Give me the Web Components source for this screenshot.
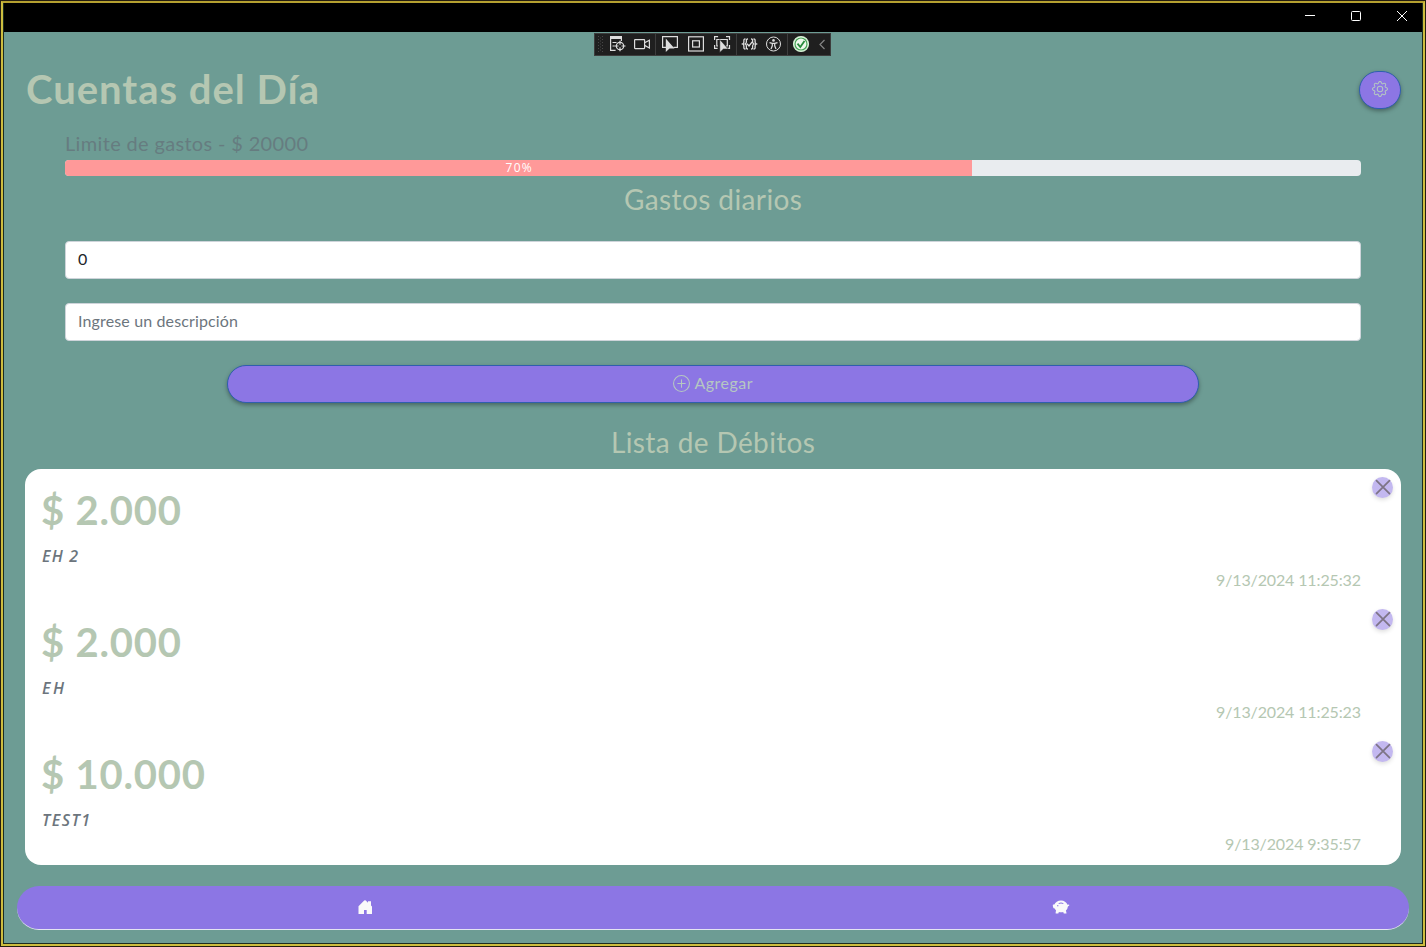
<!DOCTYPE html>
<html lang="es">
<head>
<meta charset="utf-8">
<title>Cuentas del Día</title>
<style>
html,body{margin:0;height:100%;overflow:hidden}
body{font-family:Lato,"Noto Sans",sans-serif;font-size:16px}
</style>
</head>
<body>
<app-window>
  <debug-toolbar slot="overlay"></debug-toolbar>
  <page-header heading="Cuentas del Día"></page-header>
  <spending-limit label="Limite de gastos - $ 20000" percent="70"></spending-limit>
  <section-title style="margin-top:6px" text="Gastos diarios" fit="178"></section-title>
  <text-field style="margin-top:25px" text="0" fit="9"></text-field>
  <text-field style="margin-top:24px" text="Ingrese un descripción" fit="160" placeholder></text-field>
  <add-button></add-button>
  <section-title style="margin-top:22px" text="Lista de Débitos" fit="204"></section-title>
  <debit-list>
    <debit-item amount="$ 2.000" afit="140" note="EH 2" nfit="36" date="9/13/2024 11:25:32" dfit="145"></debit-item>
    <debit-item amount="$ 2.000" afit="140" note="EH" nfit="22" date="9/13/2024 11:25:23" dfit="145"></debit-item>
    <debit-item amount="$ 10.000" afit="164" note="TEST1" nfit="48" date="9/13/2024 9:35:57" dfit="136"></debit-item>
  </debit-list>
  <bottom-nav></bottom-nav>
</app-window>
<script>
class Base extends HTMLElement{
  connectedCallback(){
    this.attachShadow({mode:'open'}).innerHTML=this.view();
  }
  a(n){return this.getAttribute(n)||''}
}
/* Text run whose tracking is tuned to a given width. */
customElements.define('fit-text',class extends Base{
  view(){return `<style>:host{display:inline-block;white-space:nowrap}span{display:inline-block}</style><span>${this.a('text')}</span>`}
  connectedCallback(){
    super.connectedCallback();
    const s=this.shadowRoot.querySelector('span'),n=this.a('text').length,w=+this.a('width');
    const gap=(w-s.getBoundingClientRect().width)/Math.max(1,n-1);
    if(n>1){s.style.letterSpacing=gap+'px';s.style.marginRight=-gap+'px'}
  }
});
customElements.define('app-window',class extends Base{
  view(){return `<style>
  :host{display:block;box-sizing:border-box;width:1426px;height:947px;border:1px solid #241d10;background:#6d9c94}
  .a{box-sizing:border-box;height:945px;border:2px solid #cdbd3f;border-top-color:#b5a030}
  .b{box-sizing:border-box;height:941px;border:1px solid #1c2c20;border-top:0;background:#6d9c94;position:relative}
  .bar{height:29px;background:#000;display:flex;justify-content:flex-end;padding-right:1px}
  .bar svg{width:46px;height:26px;fill:none;stroke:#fff}
  </style><div class="a"><div class="b"><div class="bar">
  <svg viewBox="0 0 46 26"><path d="M22 12.5h10"/></svg>
  <svg viewBox="0 0 46 26"><rect x="22.5" y="8.5" width="9" height="9" rx="1"/></svg>
  <svg viewBox="0 0 46 26"><path d="M22 8l10 10M32 8l-10 10"/></svg>
  </div><slot></slot><slot name="overlay"></slot></div></div>`}
});
customElements.define('debug-toolbar',class extends Base{
  view(){return `<style>
  :host{position:absolute;left:590px;top:30px;width:237px;height:23px;box-sizing:border-box;border:1px solid #3d3d3d;background:#1f1f1f}
  svg{display:block;width:235px;height:21px}</style>
  <svg viewBox="595 34 235 21" fill="none" stroke="#dedede" stroke-width="1.2">
  <path d="M598.5 36v16M602.5 36v16" stroke="#484848" stroke-width="1" stroke-dasharray="1 2"/><path d="M600.5 37.5v14" stroke="#484848" stroke-width="1" stroke-dasharray="1 2"/>
  <path d="M655.5 34v21M736.5 34v21M787.5 34v21" stroke="#3d3d3d" stroke-width="1"/>
  <path d="M610 36h12v3h-12z" fill="#dedede" stroke="none"/><path d="M610.6 38v12.400h5M621.400 38v3M612.500 42.500h4M612.500 46h2"/>
  <circle cx="620" cy="46" r="3.700"/><path d="M620 40.800v4M620 47.200v4M614.500 46h4M621.500 46h4"/>
  <rect x="634.600" y="39.600" width="10" height="9" rx=".5"/><path d="M644.600 42.800l4.800-2.600v7.800l-4.800-2.600"/>
  <path d="M666 47.400h-3.400v-10.800h14.800v10.800h-4"/><path d="M665.800 38.500v13.500l3.700-3.600h5z" fill="#dedede" stroke="none"/>
  <rect x="688.600" y="36.800" width="14.800" height="14.200"/><rect x="692.600" y="40.800" width="6.800" height="6.200"/>
  <path d="M714.600 40v-3.400h3.500M726 36.600h3.500V40M714.600 45v3.400h3M727 48.400h2.500V45"/><path d="M718 46h-1.200v-6.500h10.500V46H726"/><path d="M719.800 39.500v13l3.600-3.500h4.800z" fill="#dedede" stroke="#1f1f1f" stroke-width=".5"/>
  <path d="M745.500 39c-2 0-1.600 1-1.600 3 0 1.300-.5 1.600-1.400 2 .9.400 1.400.7 1.400 2 0 2-.4 3 1.600 3M753.500 39c2 0 1.600 1 1.600 3 0 1.300.5 1.600 1.400 2-.9.400-1.400.7-1.400 2 0 2 .4 3-1.600 3M748 39c-2 0-1.600 1-1.600 3 0 1.300-.5 1.600-1.400 2 .9.400 1.400.7 1.400 2 0 2-.4 3 1.600 3M751 39c2 0 1.600 1 1.600 3 0 1.300.5 1.600 1.400 2-.9.400-1.400.7-1.400 2 0 2 .4 3-1.600 3M747 43.800l2 2.200 3.200-4.200" stroke-width="1.300"/>
  <circle cx="773.500" cy="44" r="7" stroke-width="1"/><circle cx="773.500" cy="40.400" r="1.300" fill="#dedede" stroke="none"/><path d="M769.500 42.600l2.700.8h2.600l2.700-.8M772.300 43.400v2.400l-1.300 3.200M774.700 43.400v2.400l1.300 3.200" stroke-width="1.200"/>
  <circle cx="801" cy="44" r="7.500" fill="#f3fff1" stroke="#d5f0d4"/><circle cx="801" cy="44" r="6" fill="#eef8ec" stroke="#45a255"/><path d="M797.500 43.700l2.800 3.300 4.200-6" stroke="#278b3c" stroke-width="1.800"/>
  <path d="M824.500 40l-4.500 4.500 4.500 4.500" stroke="#858585"/></svg>`}
});
customElements.define('page-header',class extends Base{
  view(){return `<style>
  :host{display:flex;align-items:center;justify-content:space-between;height:60px;padding:28px 21px 0 22px}
  h1{margin:-2px 0 0;font-size:40px;line-height:48px;font-weight:700;color:#b5c7b2}
  button{display:flex;align-items:center;justify-content:center;width:42px;height:38px;padding:0 0 2px;border-radius:19px;border:1px solid #2f5fae;background:#8c76e4;box-shadow:0 2px 4px rgba(0,0,0,.35)}
  </style><h1><fit-text text="${this.a('heading')}" width="293"></fit-text></h1>
  <button aria-label="Ajustes"><svg width="16" height="16" viewBox="0 0 16 16" fill="#b5c7c2"><path d="M8 4.754a3.246 3.246 0 1 0 0 6.492 3.246 3.246 0 0 0 0-6.492M5.754 8a2.246 2.246 0 1 1 4.492 0 2.246 2.246 0 0 1-4.492 0"/><path d="M9.796 1.343c-.527-1.790-3.065-1.790-3.592 0l-.094.319a.873.873 0 0 1-1.255.52l-.292-.16c-1.640-.892-3.433.902-2.540 2.541l.159.292a.873.873 0 0 1-.52 1.255l-.319.094c-1.790.527-1.790 3.065 0 3.592l.319.094a.873.873 0 0 1 .52 1.255l-.16.292c-.892 1.640.901 3.434 2.541 2.540l.292-.159a.873.873 0 0 1 1.255.52l.094.319c.527 1.790 3.065 1.790 3.592 0l.094-.319a.873.873 0 0 1 1.255-.52l.292.16c1.640.893 3.434-.902 2.540-2.541l-.159-.292a.873.873 0 0 1 .52-1.255l.319-.094c1.790-.527 1.790-3.065 0-3.592l-.319-.094a.873.873 0 0 1-.52-1.255l.16-.292c.893-1.640-.902-3.433-2.541-2.540l-.292.159a.873.873 0 0 1-1.255-.52zm-2.633.283c.246-.835 1.428-.835 1.674 0l.094.319a1.873 1.873 0 0 0 2.693 1.115l.291-.16c.764-.415 1.600.42 1.184 1.185l-.159.292a1.873 1.873 0 0 0 1.116 2.692l.318.094c.835.246.835 1.428 0 1.674l-.319.094a1.873 1.873 0 0 0-1.115 2.693l.16.291c.415.764-.42 1.600-1.185 1.184l-.291-.159a1.873 1.873 0 0 0-2.693 1.116l-.094.318c-.246.835-1.428.835-1.674 0l-.094-.319a1.873 1.873 0 0 0-2.692-1.115l-.292.16c-.764.415-1.600-.42-1.184-1.185l.159-.291A1.873 1.873 0 0 0 1.945 8.930l-.319-.094c-.835-.246-.835-1.428 0-1.674l.319-.094A1.873 1.873 0 0 0 3.060 4.377l-.16-.292c-.415-.764.42-1.600 1.185-1.184l.292.159a1.873 1.873 0 0 0 2.692-1.115z"/></svg></button>`}
});
customElements.define('spending-limit',class extends Base{
  view(){return `<style>
  :host{display:block;margin:8px 61px 0}
  .l{font-size:20px;line-height:30px;height:32px;color:#667c80}
  .t{height:16px;border-radius:4px;background:#e9ecef;overflow:hidden}
  .f{height:16px;width:${this.a('percent')}%;background:#ff9999;color:#fff;font:12px/16px "Open Sans",sans-serif;text-align:center}
  fit-text{vertical-align:top}
  </style><div class="l"><fit-text text="${this.a('label')}" width="243"></fit-text></div>
  <div class="t"><div class="f"><fit-text text="${this.a('percent')}%" width="26"></fit-text></div></div>`}
});
customElements.define('section-title',class extends Base{
  view(){return `<style>:host{display:block;height:34px;text-align:center}
  h3{margin:0;font-size:28px;line-height:34px;font-weight:400;color:#b5c7b2}fit-text{vertical-align:top}</style>
  <h3><fit-text text="${this.a('text')}" width="${this.a('fit')}"></fit-text></h3>`}
});
customElements.define('text-field',class extends Base{
  view(){return `<style>:host{display:block;box-sizing:border-box;height:38px;margin:0 61px;padding:5px 12px;border:1px solid #ced4da;border-radius:4px;background:#fff;color:#212529;line-height:24px}
  :host([placeholder]){color:#6c757d}fit-text{vertical-align:top}</style>
  <fit-text text="${this.a('text')}" width="${this.a('fit')}"></fit-text>`}
});
customElements.define('add-button',class extends Base{
  view(){return `<style>:host{display:block;width:972px;margin:24px auto 0}
  button{display:flex;align-items:center;justify-content:center;gap:4px;width:100%;height:38px;box-sizing:border-box;padding:0 0 2px;border:1px solid #2f5fae;border-radius:19px;background:#8c76e4;color:#b5c7c2;font:inherit;line-height:24px;box-shadow:0 2px 4px rgba(0,0,0,.35)}
  </style>
  <button><svg width="17" height="17" viewBox="0 0 16 16" fill="#b5c7c2"><path d="M8 15A7 7 0 1 1 8 1a7 7 0 0 1 0 14m0 1A8 8 0 1 0 8 0a8 8 0 0 0 0 16"/><path d="M8 4a.5.5 0 0 1 .5.5v3h3a.5.5 0 0 1 0 1h-3v3a.5.5 0 0 1-1 0v-3h-3a.5.5 0 0 1 0-1h3v-3A.5.5 0 0 1 8 4"/></svg><fit-text text="Agregar" width="58"></fit-text></button>`}
});
customElements.define('debit-list',class extends Base{
  view(){return `<style>:host{display:block;height:396px;margin:10px 21px 0;border-radius:16px;background:#fff}</style><slot></slot>`}
});
customElements.define('debit-item',class extends Base{
  view(){return `<style>
  :host{display:grid;grid-template-columns:1fr 29px;height:132px;box-sizing:border-box;padding:8px 0 0 16px}
  .m{display:flex;flex-direction:column;padding-right:11px}
  .m fit-text{display:block}
  .v{font-size:40px;line-height:48px;margin-top:9px;height:48px;font-weight:700;color:#b5c7b2}
  .n{font:italic 600 16px/24px "Open Sans",sans-serif;margin-top:10px;padding-left:1px;color:#6c757d}
  .d{line-height:24px;align-self:flex-end;color:#b5c7b2}
  button{width:21px;height:21px;padding:0;border:0;border-radius:50%;background:#c3b8f0;box-shadow:0 2px 4px rgba(0,0,0,.13)}
  svg{display:block}
  </style><div class="m"><div class="v"><fit-text text="${this.a('amount')}" width="${this.a('afit')}"></fit-text></div>
  <div class="n"><fit-text text="${this.a('note')}" width="${this.a('nfit')}"></fit-text></div>
  <div class="d"><fit-text text="${this.a('date')}" width="${this.a('dfit')}"></fit-text></div></div>
  <button aria-label="Eliminar"><svg width="21" height="21" viewBox="0 0 21 21" stroke="#7d7486" stroke-width="1.700" stroke-linecap="round"><path d="M4.500 3.700l13 13M17.500 3.700l-13 13"/></svg></button>`}
});
customElements.define('bottom-nav',class extends Base{
  view(){return `<style>:host{display:grid;grid-template-columns:1fr 1fr;box-sizing:border-box;height:44px;margin:21px 13px 0;border-radius:22px;background:#8c76e4;border-bottom:1px solid #e4e4f2;align-items:center;justify-items:center}
  svg{display:block;fill:#fafafa;margin-bottom:2px}svg+svg{margin-right:1px}</style>
  <svg width="16" height="16" viewBox="0 0 16 16"><path d="M1.500 7.300L7.200 1.600Q8 .9 8.800 1.600L11 3.800V2.200h3v4.200l1 1V15H9.700v-4H7v4H1.500z"/></svg>
  <svg width="18" height="16" viewBox="0 0 18 16"><path fill-rule="evenodd" d="M9 1.500C5.800 1.500 3.200 3.200 2.400 5.600H1.500Q.6 5.700.8 6.800l.3 1.500q.3 1.300 1.600 1.300.5 1 1.300 1.600L3.600 14q0 .5.500.500h2.200l.6-1.600q2.200.5 4.300 0l.6 1.600h2.200q.6 0 .5-.6l-.6-2.400q1.800-1.500 2-4l1.400-1.100-.2-1-1.600.3C14.500 3.200 12 1.500 9 1.500M6.500 4.200q2.500-1.200 5 0l-.3.7q-2.200-.9-4.400 0zM5 6.300h1.400v1H5z"/></svg>`}
});
</script>
</body>
</html>
